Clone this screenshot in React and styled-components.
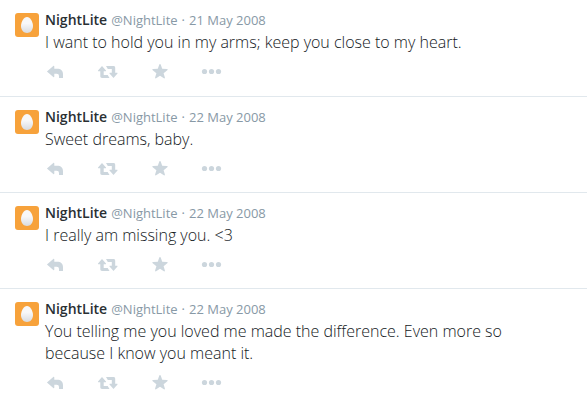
import React from 'react'
import styled, { createGlobalStyle } from 'styled-components'

const GlobalStyle = createGlobalStyle`
    body {
        margin: 0;
        background: #fff;
        font-family: 'Open Sans', sans-serif;
    }
`
const Timeline = styled.ol`
    list-style: none;
    margin: 0;
    padding: 0;
`
const Tweet = styled.li`
    display: flex;
    gap: 6px;
    padding: 9px 12px 15px 15px;
    & + & {
        padding-bottom: 14px;
        border-top: 1px solid #e1e8ed;
    }
`
const Avatar = styled.svg`
    flex: none;
    width: 24px;
    height: 24px;
    margin-top: 4px;
`
const Content = styled.div`
    flex: 1;
    min-width: 0;
`
const Header = styled.div`
    display: flex;
    align-items: baseline;
    gap: 4px;
    line-height: 22px;
    font-size: 13px;
    color: #8899a6;
`
const Name = styled.a`
    font-size: 14px;
    font-weight: 600;
    color: #292f33;
    text-decoration: none;
`
const Muted = styled.a`
    color: inherit;
    text-decoration: none;
`
const Text = styled.p`
    margin: 0 0 10px;
    max-width: 500px;
    font-size: 16px;
    font-weight: 300;
    line-height: 22px;
    color: #14191d;
`
const Actions = styled.div`
    display: flex;
    gap: 32px;
`
const Action = styled.button`
    display: flex;
    width: 20px;
    height: 18px;
    padding: 0;
    border: 0;
    background: none;
    color: #ccd6dd;
    cursor: pointer;
    svg {
        width: 20px;
        height: 18px;
        fill: currentColor;
        overflow: visible;
    }
`

const tweets = [
    { date: '21 May 2008', text: 'I want to hold you in my arms; keep you close to my heart.' },
    { date: '22 May 2008', text: 'Sweet dreams, baby.' },
    { date: '22 May 2008', text: 'I really am missing you. <3' },
    { date: '22 May 2008', text: 'You telling me you loved me made the difference. Even more so because I know you meant it.' },
]

const actions = [
    { label: 'Reply', icon: <path d="M2.200 8.200L8.300 3c.5-.4 1-.2 1 .5v2.300h2.700c4 0 6 2 6 5.700v3.500h-4v-1.700c0-1.700-.7-2.500-2.400-2.500H9.300v2.700c0 .7-.5.9-1 .5L2.200 8.800c-.3-.2-.3-.4 0-.6z" /> },
    { label: 'Retweet', icon: <path d="M5 3l4 4.500c.2.300.1.700-.3.700H6.700V12h4l1.800 3H5c-1 0-1.700-.7-1.700-1.700V8.200h-2c-.4 0-.5-.4-.3-.7zM16.500 15l-4-4.500c-.2-.3-.1-.7.3-.7h2V6h-4L9 3h7.500c1 0 1.700.7 1.700 1.700v5.100h2c.4 0 .5.4.3.7z" /> },
    { label: 'Favourite', icon: <path d="M11 1c.4 0 .6.300.7.600l1.500 4.200 4.700.2c.8 0 1 .7.400 1.200l-3.700 3 1.300 4.300c.2.800-.3 1.200-1 .8L11 12.700l-3.900 2.600c-.7.400-1.200 0-1-.8l1.300-4.300-3.700-3c-.6-.5-.4-1.200.4-1.200l4.700-.2 1.500-4.200c.1-.3.3-.6.7-.6z" /> },
    {
        label: 'More',
        icon: (
            <>
                <circle cx="3.500" cy="8.500" r="2.600" />
                <circle cx="10.500" cy="8.500" r="2.600" />
                <circle cx="17.500" cy="8.500" r="2.600" />
            </>
        ),
    },
]

const EggAvatar = () => (
    <Avatar viewBox="0 0 24 24" role="img" aria-label="NightLite">
        <defs>
            <linearGradient id="egg" x1="0" y1="0" x2="0" y2="1">
                <stop offset="0.400" stopColor="#f8f8f9" />
                <stop offset="1" stopColor="#d8dbe0" />
            </linearGradient>
        </defs>
        <rect width="24" height="24" rx="3" fill="#f7a23b" />
        <path d="M12 4c3.300 0 6 5 6 9 0 4.200-2.700 7-6 7s-6-2.800-6-7c0-4 2.700-9 6-9z" fill="url(#egg)" />
    </Avatar>
)

const App = () => {
  return (
    <>
        <GlobalStyle />
        <Timeline>
            {tweets.map((tweet, index) => (
                <Tweet key={index}>
                    <EggAvatar />
                    <Content>
                        <Header>
                            <Name href="#">NightLite</Name>
                            <Muted href="#">@NightLite</Muted>
                            <span>·</span>
                            <Muted href="#">{tweet.date}</Muted>
                        </Header>
                        <Text>{tweet.text}</Text>
                        <Actions>
                            {actions.map((action) => (
                                <Action type="button" aria-label={action.label} key={action.label}>
                                    <svg viewBox="0 0 20 18">{action.icon}</svg>
                                </Action>
                            ))}
                        </Actions>
                    </Content>
                </Tweet>
            ))}
        </Timeline>
    </>
  )
}

export default App
